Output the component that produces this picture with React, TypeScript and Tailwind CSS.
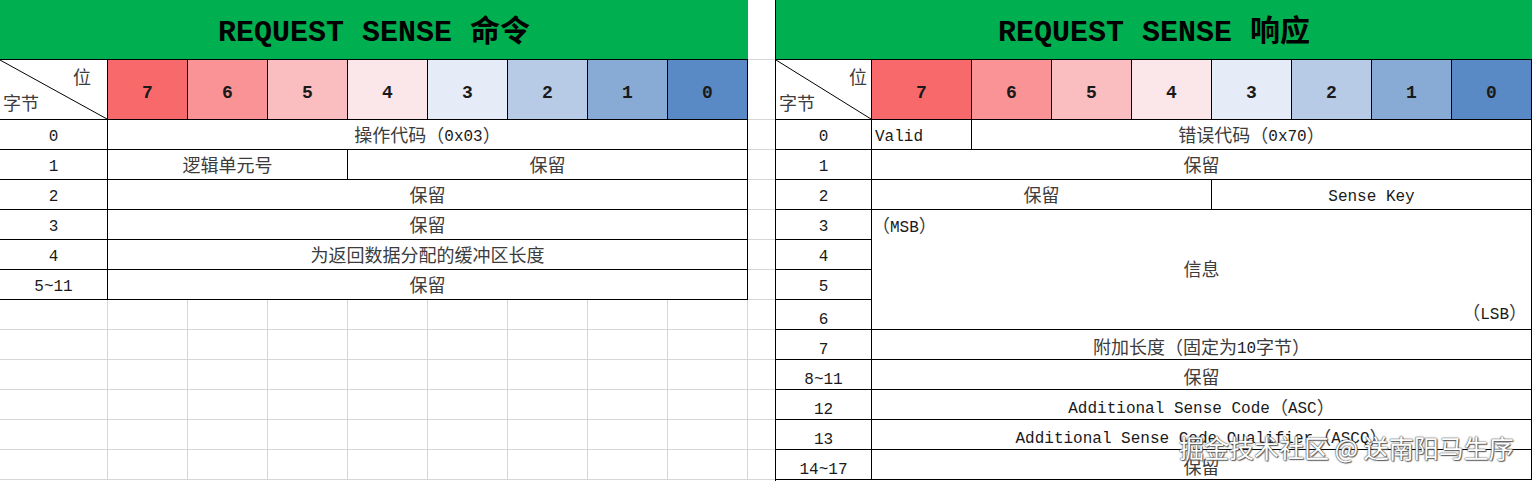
import type { ReactNode } from 'react'

const cjk = /([\u3000-\u303f\u4e00-\u9fff\uff00-\uffef]+)/

// 中文部分用稍大的字号，和表格里的等宽英文对齐
function T({ s, big }: { s: string; big?: string }) {
  return (
    <>
      {s.split(cjk).map((p, i) =>
        i % 2 ? (
          <span key={i} className={big ?? 'text-[18px] text-[#3c3c3c]'}>
            {p}
          </span>
        ) : (
          p
        )
      )}
    </>
  )
}

const bits = ['7', '6', '5', '4', '3', '2', '1', '0']
const heat = [
  'bg-[#f8696b]',
  'bg-[#f99395]',
  'bg-[#fabdc0]',
  'bg-[#fbe7ea]',
  'bg-[#e5ecf7]',
  'bg-[#b7cbe7]',
  'bg-[#88abd6]',
  'bg-[#5a8ac6]'
]

const cell = 'border-r border-b border-black flex items-center justify-center whitespace-nowrap'

function Title({ text }: { text: string }) {
  return (
    <div className="h-[60px] bg-[#00b050] border-b border-black flex items-center justify-center">
      <span className="text-[30px] font-bold text-black leading-none pt-[6px]">
        <T s={text} big="text-[30px] font-semibold" />
      </span>
    </div>
  )
}

function HeaderRow({ cols, posRight }: { cols: string; posRight: string }) {
  return (
    <div className={`grid ${cols} h-[60px]`}>
      <div className="relative border-r border-b border-black">
        <svg className="absolute inset-0 w-full h-full" preserveAspectRatio="none" viewBox="0 0 100 100">
          <line x1="0" y1="0" x2="100" y2="100" stroke="#000" strokeWidth="1" vectorEffect="non-scaling-stroke" />
        </svg>
        <span className={`absolute top-[10px] ${posRight} text-[18px] text-[#3c3c3c]`}>位</span>
        <span className="absolute left-[3px] bottom-[5px] text-[18px] text-[#3c3c3c]">字节</span>
      </div>
      {bits.map((b, i) => (
        <div key={b} className={`${cell} ${heat[i]} pt-[6px] text-[18px] font-bold text-[#1a1a1a]`}>
          {b}
        </div>
      ))}
    </div>
  )
}

function Row({ n, children, low }: { n: string; children?: ReactNode; low?: boolean }) {
  return (
    <>
      <div className={`${cell} ${low ? 'pt-[10px]' : 'pt-[4px]'}`}>{n}</div>
      {children}
    </>
  )
}

function CommandTable() {
  return (
    <div className="w-[748px] flex flex-col shrink-0">
      <Title text="REQUEST SENSE 命令" />
      <HeaderRow cols="grid-cols-[108px_repeat(8,80px)]" posRight="right-[16px]" />
      <div className="grid grid-cols-[108px_repeat(8,80px)] auto-rows-[30px]">
        <Row n="0">
          <div className={`${cell} col-span-8 pt-[4px]`}>
            <T s="操作代码（0x03）" />
          </div>
        </Row>
        <Row n="1">
          <div className={`${cell} col-span-3 pt-[4px]`}>
            <T s="逻辑单元号" />
          </div>
          <div className={`${cell} col-span-5 pt-[4px]`}>
            <T s="保留" />
          </div>
        </Row>
        <Row n="2">
          <div className={`${cell} col-span-8 pt-[4px]`}>
            <T s="保留" />
          </div>
        </Row>
        <Row n="3">
          <div className={`${cell} col-span-8 pt-[4px]`}>
            <T s="保留" />
          </div>
        </Row>
        <Row n="4">
          <div className={`${cell} col-span-8 pt-[4px]`}>
            <T s="为返回数据分配的缓冲区长度" />
          </div>
        </Row>
        <Row n="5~11">
          <div className={`${cell} col-span-8 pt-[4px]`}>
            <T s="保留" />
          </div>
        </Row>
      </div>
      {/* 表格下方的空白单元格 */}
      <div className="grid grid-cols-[108px_repeat(8,80px)] auto-rows-[30px]">
        {Array.from({ length: 54 }).map((_, i) => (
          <div key={i} className="border-r border-b border-[#d6d6d6]" />
        ))}
      </div>
    </div>
  )
}

function Spacer() {
  return (
    <div className="w-[27px] shrink-0 flex flex-col">
      <div className="h-[60px] shrink-0 border-b border-[#d6d6d6]" />
      <div className="h-[60px] shrink-0 border-b border-[#d6d6d6]" />
      {Array.from({ length: 12 }).map((_, i) => (
        <div key={i} className="h-[30px] shrink-0 border-b border-[#d6d6d6]" />
      ))}
    </div>
  )
}

function ResponseTable() {
  return (
    <div className="w-[757px] shrink-0 border-l border-black flex flex-col">
      <Title text="REQUEST SENSE 响应" />
      <HeaderRow cols="grid-cols-[96px_100px_repeat(7,80px)]" posRight="right-[4px]" />
      <div className="grid grid-cols-[96px_100px_repeat(7,80px)] auto-rows-[30px]">
        <Row n="0">
          <div className={`${cell} !justify-start pl-[3px] pt-[4px]`}>Valid</div>
          <div className={`${cell} col-span-7 pt-[4px]`}>
            <T s="错误代码（0x70）" />
          </div>
        </Row>
        <Row n="1">
          <div className={`${cell} col-span-8 pt-[4px]`}>
            <T s="保留" />
          </div>
        </Row>
        <Row n="2">
          <div className={`${cell} col-span-4 pt-[4px]`}>
            <T s="保留" />
          </div>
          <div className={`${cell} col-span-4 pt-[4px]`}>Sense Key</div>
        </Row>
        <Row n="3">
          <div className="border-r border-b border-black col-span-8 row-span-4 flex flex-col whitespace-nowrap">
            <div className="self-start pt-[8px]">
              <T s="（MSB）" />
            </div>
            <div className="flex-1 flex items-center justify-center">
              <T s="信息" />
            </div>
            <div className="self-end pr-[4px] pb-[6px]">
              <T s="（LSB）" />
            </div>
          </div>
        </Row>
        <Row n="4" />
        <Row n="5" />
        <Row n="6" low />
        <Row n="7" low>
          <div className={`${cell} col-span-8 pt-[8px]`}>
            <T s="附加长度（固定为10字节）" />
          </div>
        </Row>
        <Row n="8~11" low>
          <div className={`${cell} col-span-8 pt-[8px]`}>
            <T s="保留" />
          </div>
        </Row>
        <Row n="12" low>
          <div className={`${cell} col-span-8 pt-[8px]`}>
            <T s="Additional Sense Code（ASC）" />
          </div>
        </Row>
        <Row n="13" low>
          <div className={`${cell} col-span-8 pt-[8px]`}>
            <T s="Additional Sense Code Qualifier（ASCQ）" />
          </div>
        </Row>
        <Row n="14~17" low>
          <div className={`${cell} col-span-8 pt-[8px]`}>
            <T s="保留" />
          </div>
        </Row>
      </div>
    </div>
  )
}

export default function App() {
  return (
    <div className="relative w-[1532px] h-[481px] overflow-hidden bg-white flex font-['Liberation_Mono','Noto_Sans_CJK_SC',monospace] text-[16px] text-[#1a1a1a] leading-none">
      <CommandTable />
      <Spacer />
      <ResponseTable />
      {/* 水印 */}
      <div className="absolute left-[1179px] top-[435px] text-[25px] leading-none text-white font-['Noto_Sans_CJK_SC',sans-serif] [text-shadow:0_0_1px_#444,0_0_2px_#555,1px_1px_1px_#666]">
        掘金技术社区 @ 送南阳马生序
      </div>
    </div>
  )
}
